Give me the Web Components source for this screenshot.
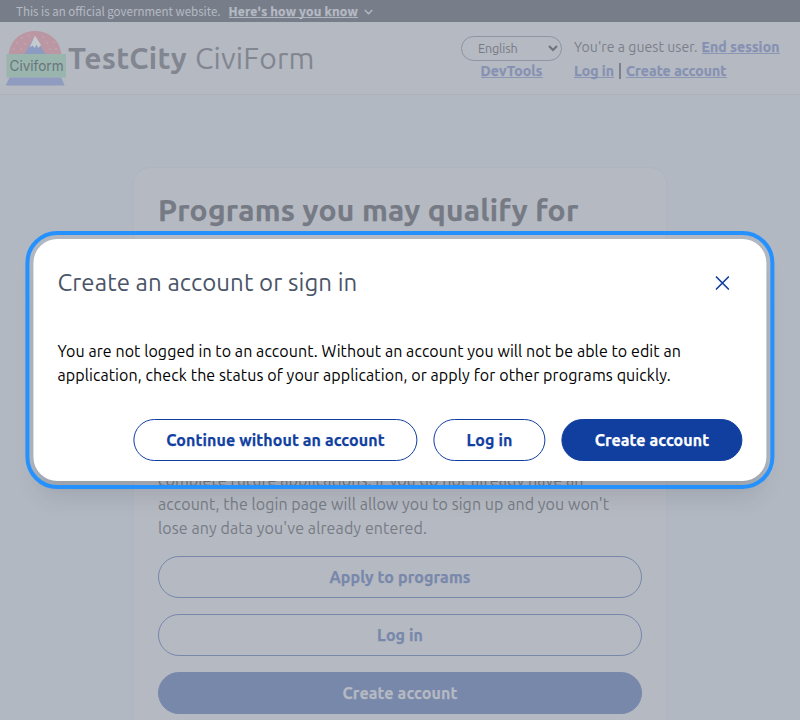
<!DOCTYPE html>
<html lang="en">
<head>
<meta charset="utf-8">
<title>TestCity CiviForm</title>
<style>
html,body{margin:0;height:720px;overflow:hidden}
body{background:#b1b8c2;font-family:Ubuntu,"Noto Sans",sans-serif;position:relative}
</style>
</head>
<body>
<civi-page></civi-page>
<script>
// A single line of text set to a given measure.
class TextRun extends HTMLElement{
  connectedCallback(){
    const w=+this.getAttribute('w');
    this.attachShadow({mode:'open'}).innerHTML=`<style>
      :host{display:inline-block;width:${w}px;white-space:nowrap;text-align:left;vertical-align:top}
      span{display:inline-block;transform-origin:0 50%;vertical-align:top}
    </style><span><slot></slot></span>`;
    const s=this.shadowRoot.querySelector('span');
    const n=s.getBoundingClientRect().width;
    if(n&&Math.abs(w-n)<w*.04)s.style.letterSpacing=`${(w-n)/this.textContent.length}px`;
    else if(n)s.style.transform=`scaleX(${w/n})`;
    if(+getComputedStyle(this).fontWeight>=700&&!this.hasAttribute('plain'))s.style.webkitTextStroke='.25px currentColor';
  }
}
class GovBanner extends HTMLElement{
  connectedCallback(){
    this.attachShadow({mode:'open'}).innerHTML=`<style>
      :host{display:flex;height:22px;padding-left:16px;background:#787e89;color:#b5bac4;font:12px/21px "Noto Sans CJK JP",sans-serif;box-sizing:border-box}
      .k{margin-left:8px;font-weight:700}
      i{position:absolute;left:229px;top:17px;width:129px;height:1px;background:#b0b5bf}
      svg{margin:8px 0 0 5.5px}
    </style><text-run w="204.5">This is an official government website.</text-run><text-run class="k" w="129.5">Here's how you know</text-run><i></i>
    <svg width="9" height="8" viewBox="0 0 9 8" fill="none" stroke="#b5bac4" stroke-width="1.3"><path d="M.8 2 4.5 5.8 8.2 2"/></svg>`;
  }
}
class CityLogo extends HTMLElement{
  connectedCallback(){
    this.attachShadow({mode:'open'}).innerHTML=`<style>:host{display:block;width:62px;height:58px}svg{display:block}</style>
    <svg width="62" height="58" viewBox="5 29 62 58">
      <path d="M8.5 55C10 40 21 31 35 31S60 40 61.5 55Z" fill="#ba97a2"/>
      <g fill="#c4b4bd"><circle cx="22" cy="38" r=".8"/><circle cx="17" cy="43" r=".7"/><circle cx="25" cy="44" r=".7"/><circle cx="14" cy="49" r=".8"/><circle cx="21" cy="49" r=".7"/><circle cx="29" cy="36" r=".7"/><circle cx="43" cy="37" r=".7"/><circle cx="47" cy="43" r=".8"/><circle cx="54" cy="42" r=".7"/><circle cx="50" cy="49" r=".7"/><circle cx="56" cy="49" r=".8"/></g>
      <path d="M24 55 34.5 37 46 55Z" fill="#8c9bc2"/>
      <path d="M35 35.5 41 45 38.2 48 36.5 44.5 34.8 48 32.7 45.5 29.5 47.5Z" fill="#c4cbd0"/>
      <rect x="6.5" y="54" width="59.5" height="23.5" fill="#9ab5ae"/>
      <path d="M9.5 77.5H61L64.7 85.5H5.7Z" fill="#8f9cc0"/>
      <text x="9.5" y="71.4" font-family="Inter,Roboto,sans-serif" font-size="14.4" fill="#69757c" textLength="54" lengthAdjust="spacingAndGlyphs">Civiform</text>
    </svg>`;
  }
}
class SiteHeader extends HTMLElement{
  connectedCallback(){
    this.attachShadow({mode:'open'}).innerHTML=`<style>
      :host{display:flex;height:73px;box-sizing:border-box;background:#b5b9c2;border-bottom:1px solid #adb2bd;color:#7b808a;font-size:14px;line-height:24px}
      city-logo{margin:7px 0 0 5px}
      h1{margin:12px 0 0 1px;font-size:30px;line-height:48px;font-weight:400;display:flex;gap:8px;color:#818690}
      .l{margin:14px 0 0 146.5px;width:101px;text-align:center}
      .s{box-sizing:border-box;display:flex;align-items:center;justify-content:space-between;width:101px;height:25px;border:1px solid #8e94a2;border-radius:13px;padding:0 3px 0 16px;font-size:12.6px;line-height:23px;color:#757a83}
      .d{margin-top:-2px}
      .r{margin:13px 0 0 12px}
      .row{display:flex;gap:4px}
      .bar{width:1.5px;height:16px;margin:4px 1.5px 0 1px;background:#7b808a}
    </style>
    <city-logo></city-logo>
    <h1><text-run w="119" plain style="font-weight:700">TestCity</text-run><text-run w="119.5">CiviForm</text-run></h1>
    <div class="l"><div class="s"><text-run w="39.5">English</text-run><svg width="10" height="7" viewBox="0 0 10 7" fill="none" stroke="#6d727c" stroke-width="2"><path d="M1 1 5 5 9 1"/></svg></div>
    <div class="d"><link-text w="62">DevTools</link-text></div></div>
    <div class="r"><div class="row"><text-run w="123.5">You're a guest user.</text-run><link-text w="78">End session</link-text></div>
    <div class="row"><link-text w="40">Log in</link-text><span class="bar"></span><link-text w="100.5">Create account</link-text></div></div>`;
  }
}
class LinkText extends HTMLElement{
  connectedCallback(){
    this.attachShadow({mode:'open'}).innerHTML=`<style>:host{display:inline-block;height:19px;line-height:24px;margin-bottom:5px;box-sizing:border-box;border-bottom:1px solid #8b96b5;color:#8591b2;font-weight:700;vertical-align:top}</style><text-run w="${this.getAttribute('w')}">${this.textContent}</text-run>`;
  }
}
class PillButton extends HTMLElement{
  connectedCallback(){
    this.attachShadow({mode:'open'}).innerHTML=`<style>
      :host{display:flex;box-sizing:border-box;height:42px;border:1px solid var(--c);border-radius:21px;align-items:center;justify-content:center;color:var(--c);font-weight:700;font-size:16px;line-height:24px}
      :host([solid]){background:var(--c);color:var(--on)}
    </style><text-run w="${this.getAttribute('w')}">${this.textContent}</text-run>`;
  }
}
class ProgramCard extends HTMLElement{
  connectedCallback(){
    this.attachShadow({mode:'open'}).innerHTML=`<style>
      :host{display:flex;flex-direction:column;box-sizing:border-box;width:534px;height:600px;margin:72px auto 0;padding:24px;background:#b5b9c2;border:1px solid #b0b4be;border-radius:17px;color:#777c85;--c:#7888ab;--on:#b5b9c2;font-size:16px;line-height:24px}
      h2{margin:0 0 240px;font-size:30px;line-height:36px;height:36px;color:#757a84}
      p{margin:0 0 16px;display:flex;flex-direction:column}
      pill-button{margin-bottom:16px;flex:none}
    </style>
    <h2><text-run w="420.5">Programs you may qualify for</text-run></h2>
    <p><text-run w="425.5">complete future applications. If you do not already have an</text-run><text-run w="451">account, the login page will allow you to sign up and you won't</text-run><text-run w="269">lose any data you've already entered.</text-run></p>
    <pill-button w="141">Apply to programs</pill-button><pill-button w="46">Log in</pill-button><pill-button w="115" solid>Create account</pill-button>`;
  }
}
class AccountModal extends HTMLElement{
  connectedCallback(){
    this.attachShadow({mode:'open'}).innerHTML=`<style>
      :host{position:absolute;left:33px;top:239px;width:733px;transform:translateX(.4px);height:242px;box-sizing:border-box;padding:24px;background:#fff;border-radius:24px;outline:4px solid #2491ff;outline-offset:4px;box-shadow:0 20px 25px -5px rgba(0,0,0,.1),0 10px 10px -5px rgba(0,0,0,.04);display:flex;flex-direction:column;color:#000;--c:#113f9f;--on:#fff;font-size:16px;line-height:24px}
      header{display:flex;justify-content:space-between;height:76px;padding-right:13px;color:#4a5568;font-size:24px;line-height:39px}
      header svg{margin-top:13px}
      .p{display:flex;flex-direction:column;height:80px}
      .b{display:flex;gap:16px;justify-content:flex-end}
      header,.p,.b{flex:none}
    </style>
    <header><text-run w="300">Create an account or sign in</text-run><svg width="14" height="14" viewBox="0 0 14 14" fill="none" stroke="#113f9f" stroke-width="1.6"><path d="M.5.5 13.5 13.5M13.5.5.5 13.5"/></svg></header>
    <div class="p"><text-run w="623.5">You are not logged in to an account. Without an account you will not be able to edit an</text-run><text-run w="613.5">application, check the status of your application, or apply for other programs quickly.</text-run></div>
    <div class="b"><pill-button w="218.5" style="width:284px">Continue without an account</pill-button><pill-button w="46" style="width:112px">Log in</pill-button><pill-button w="114.5" solid style="width:181px">Create account</pill-button></div>`;
  }
}
class CiviPage extends HTMLElement{
  connectedCallback(){
    this.attachShadow({mode:'open'}).innerHTML=`<style>:host{display:block;height:720px;overflow:hidden}</style><gov-banner></gov-banner><site-header></site-header><program-card></program-card><account-modal></account-modal>`;
  }
}
customElements.define('text-run',TextRun);
customElements.define('link-text',LinkText);
customElements.define('pill-button',PillButton);
customElements.define('city-logo',CityLogo);
customElements.define('gov-banner',GovBanner);
customElements.define('site-header',SiteHeader);
customElements.define('program-card',ProgramCard);
customElements.define('account-modal',AccountModal);
customElements.define('civi-page',CiviPage);
</script>
</body>
</html>
